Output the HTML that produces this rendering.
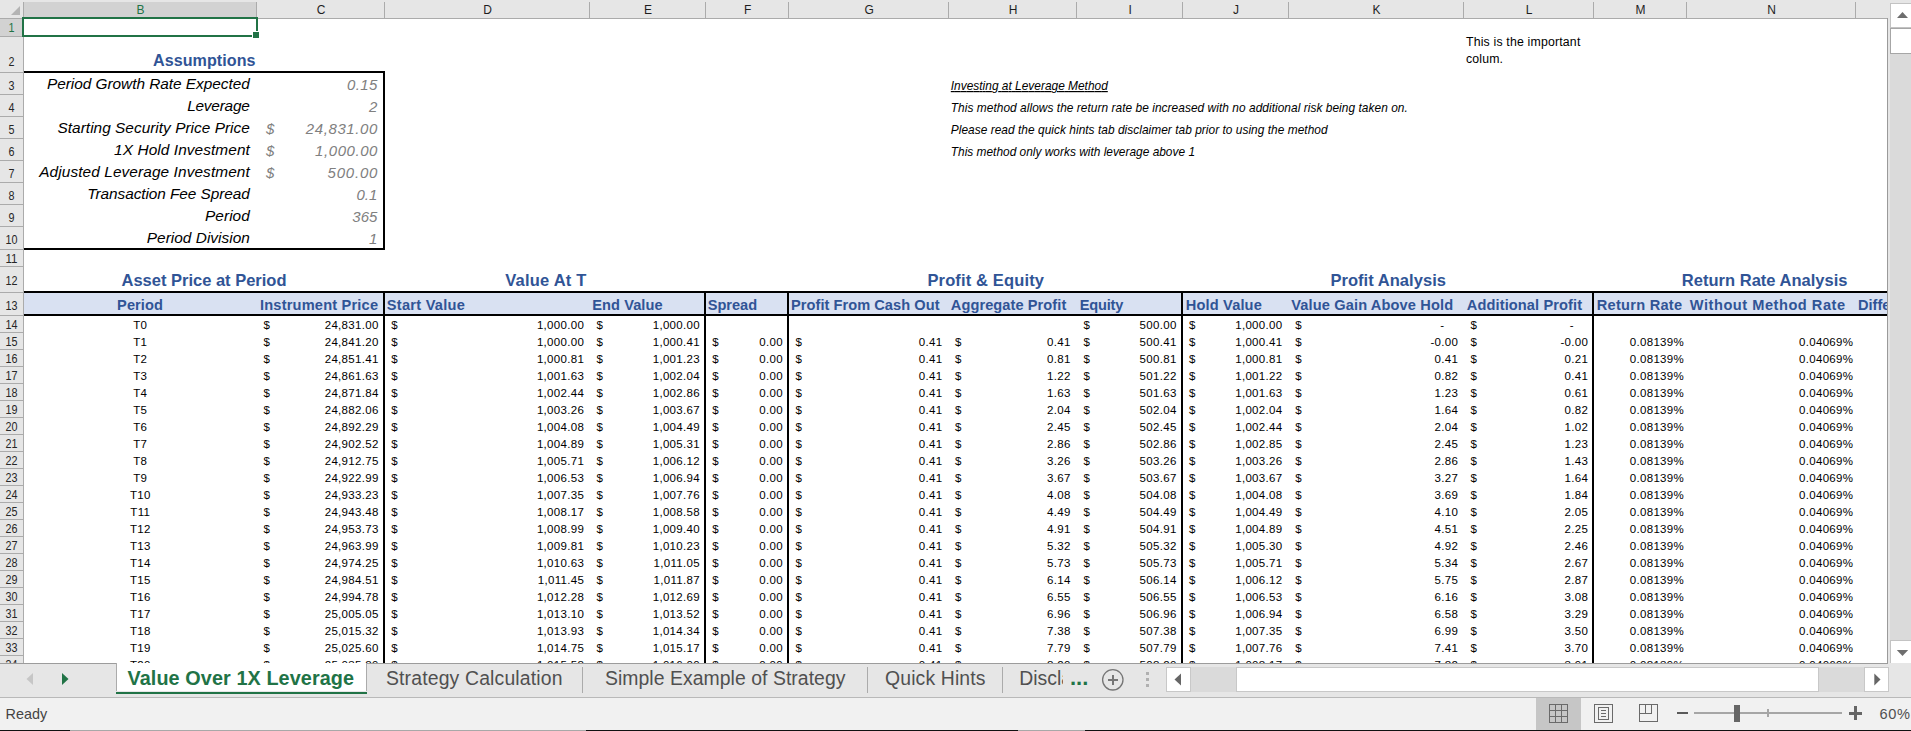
<!DOCTYPE html>
<html lang="en"><head><meta charset="utf-8"><title>Value Over 1X Leverage - Excel</title>
<style>
html,body{margin:0;padding:0;background:#fff;overflow:hidden}
svg{display:block;font-family:"Liberation Sans",sans-serif}
svg rect{shape-rendering:crispEdges}
text{white-space:pre}
</style></head><body>
<svg width="1911" height="731" viewBox="0 0 1911 731">
<defs>
<clipPath id="gridclip"><rect x="24" y="19" width="1863" height="644"/></clipPath>
<clipPath id="rowclip"><rect x="0" y="19" width="23" height="644"/></clipPath>
<clipPath id="discclip"><rect x="1000" y="660" width="63" height="40"/></clipPath>
</defs>
<rect x="0" y="0" width="1911" height="731" fill="#fff"/>
<rect x="24" y="293" width="1863" height="21" fill="#d9e1f2"/>
<rect x="24" y="71" width="361" height="2" fill="#000"/>
<rect x="24" y="248" width="361" height="2" fill="#000"/>
<rect x="383" y="71" width="2" height="179" fill="#000"/>
<rect x="24" y="291" width="1863" height="2" fill="#000"/>
<rect x="24" y="314" width="1863" height="2" fill="#000"/>
<rect x="383" y="291" width="2" height="372" fill="#000"/>
<rect x="704" y="291" width="2" height="372" fill="#000"/>
<rect x="787" y="291" width="2" height="372" fill="#000"/>
<rect x="1181" y="291" width="2" height="372" fill="#000"/>
<rect x="1592" y="291" width="2" height="372" fill="#000"/>
<text x="255.5" y="65.5" font-size="16.1" fill="#305496" textLength="102.5" lengthAdjust="spacing" text-anchor="end" font-weight="bold">Assumptions</text>
<text x="249.8" y="89.4" font-size="15.4" fill="#000" textLength="202.8" lengthAdjust="spacing" text-anchor="end" font-style="italic">Period Growth Rate Expected</text>
<text x="377.4" y="89.7" font-size="15.0" fill="#808080" textLength="30.3" lengthAdjust="spacing" text-anchor="end" font-style="italic">0.15</text>
<text x="249.8" y="111.4" font-size="15.4" fill="#000" textLength="62.6" lengthAdjust="spacing" text-anchor="end" font-style="italic">Leverage</text>
<text x="377.4" y="111.7" font-size="15.0" fill="#808080" text-anchor="end" font-style="italic">2</text>
<text x="249.8" y="133.39999999999998" font-size="15.4" fill="#000" textLength="192.3" lengthAdjust="spacing" text-anchor="end" font-style="italic">Starting Security Price Price</text>
<text x="377.4" y="133.7" font-size="15.0" fill="#808080" textLength="71.7" lengthAdjust="spacing" text-anchor="end" font-style="italic">24,831.00</text>
<text x="266" y="133.7" font-size="15.0" fill="#808080" font-style="italic">$</text>
<text x="249.8" y="155.39999999999998" font-size="15.4" fill="#000" textLength="135.7" lengthAdjust="spacing" text-anchor="end" font-style="italic">1X Hold Investment</text>
<text x="377.4" y="155.7" font-size="15.0" fill="#808080" textLength="62.3" lengthAdjust="spacing" text-anchor="end" font-style="italic">1,000.00</text>
<text x="266" y="155.7" font-size="15.0" fill="#808080" font-style="italic">$</text>
<text x="249.8" y="177.39999999999998" font-size="15.4" fill="#000" textLength="210.6" lengthAdjust="spacing" text-anchor="end" font-style="italic">Adjusted Leverage Investment</text>
<text x="377.4" y="177.7" font-size="15.0" fill="#808080" textLength="49.8" lengthAdjust="spacing" text-anchor="end" font-style="italic">500.00</text>
<text x="266" y="177.7" font-size="15.0" fill="#808080" font-style="italic">$</text>
<text x="249.8" y="199.39999999999998" font-size="15.4" fill="#000" textLength="162.5" lengthAdjust="spacing" text-anchor="end" font-style="italic">Transaction Fee Spread</text>
<text x="377.4" y="199.7" font-size="15.0" fill="#808080" text-anchor="end" font-style="italic">0.1</text>
<text x="249.8" y="221.39999999999998" font-size="15.4" fill="#000" textLength="44.8" lengthAdjust="spacing" text-anchor="end" font-style="italic">Period</text>
<text x="377.4" y="221.7" font-size="15.0" fill="#808080" text-anchor="end" font-style="italic">365</text>
<text x="249.8" y="243.39999999999998" font-size="15.4" fill="#000" textLength="103" lengthAdjust="spacing" text-anchor="end" font-style="italic">Period Division</text>
<text x="377.4" y="243.7" font-size="15.0" fill="#808080" text-anchor="end" font-style="italic">1</text>
<text x="950.8" y="90" font-size="11.9" fill="#000" textLength="157" lengthAdjust="spacing" font-style="italic" text-decoration="underline">Investing at Leverage Method</text>
<text x="950.8" y="112" font-size="11.9" fill="#000" textLength="457" lengthAdjust="spacing" font-style="italic">This method allows the return rate be increased with no additional risk being taken on.</text>
<text x="950.8" y="134" font-size="11.9" fill="#000" textLength="376.8" lengthAdjust="spacing" font-style="italic">Please read the quick hints tab disclaimer tab prior to using the method</text>
<text x="950.8" y="156" font-size="11.9" fill="#000" textLength="244.2" lengthAdjust="spacing" font-style="italic">This method only works with leverage above 1</text>
<text x="1466" y="46" font-size="12.3" fill="#000" textLength="114.3" lengthAdjust="spacing">This is the important</text>
<text x="1466" y="63" font-size="12.3" fill="#000" textLength="37" lengthAdjust="spacing">colum.</text>
<text x="204" y="285.5" font-size="16.5" fill="#305496" textLength="165" lengthAdjust="spacing" text-anchor="middle" font-weight="bold">Asset Price at Period</text>
<text x="545.8" y="285.5" font-size="16.5" fill="#305496" textLength="81.3" lengthAdjust="spacing" text-anchor="middle" font-weight="bold">Value At T</text>
<text x="985.7" y="285.5" font-size="16.5" fill="#305496" textLength="116.5" lengthAdjust="spacing" text-anchor="middle" font-weight="bold">Profit &amp; Equity</text>
<text x="1388.2" y="285.5" font-size="16.5" fill="#305496" textLength="115.5" lengthAdjust="spacing" text-anchor="middle" font-weight="bold">Profit Analysis</text>
<text x="1764.7" y="285.5" font-size="16.5" fill="#305496" textLength="165.7" lengthAdjust="spacing" text-anchor="middle" font-weight="bold">Return Rate Analysis</text>
<text x="140" y="309.7" font-size="14.6" fill="#305496" textLength="45.8" lengthAdjust="spacing" text-anchor="middle" font-weight="bold">Period</text>
<text x="319" y="309.7" font-size="14.6" fill="#305496" textLength="118" lengthAdjust="spacing" text-anchor="middle" font-weight="bold">Instrument Price</text>
<text x="386.8" y="309.7" font-size="14.6" fill="#305496" textLength="78" lengthAdjust="spacing" font-weight="bold">Start Value</text>
<text x="592.3" y="309.7" font-size="14.6" fill="#305496" textLength="70.3" lengthAdjust="spacing" font-weight="bold">End Value</text>
<text x="707.8" y="309.7" font-size="14.6" fill="#305496" textLength="49.3" lengthAdjust="spacing" font-weight="bold">Spread</text>
<text x="791" y="309.7" font-size="14.6" fill="#305496" textLength="148.5" lengthAdjust="spacing" font-weight="bold">Profit From Cash Out</text>
<text x="950.8" y="309.7" font-size="14.6" fill="#305496" textLength="115.5" lengthAdjust="spacing" font-weight="bold">Aggregate Profit</text>
<text x="1079.8" y="309.7" font-size="14.6" fill="#305496" textLength="43.5" lengthAdjust="spacing" font-weight="bold">Equity</text>
<text x="1185.8" y="309.7" font-size="14.6" fill="#305496" textLength="76" lengthAdjust="spacing" font-weight="bold">Hold Value</text>
<text x="1291.3" y="309.7" font-size="14.6" fill="#305496" textLength="161.8" lengthAdjust="spacing" font-weight="bold">Value Gain Above Hold</text>
<text x="1466.8" y="309.7" font-size="14.6" fill="#305496" textLength="115.3" lengthAdjust="spacing" font-weight="bold">Additional Profit</text>
<text x="1596.8" y="309.7" font-size="14.6" fill="#305496" textLength="85.3" lengthAdjust="spacing" font-weight="bold">Return Rate</text>
<text x="1689.8" y="309.7" font-size="14.6" fill="#305496" textLength="155.3" lengthAdjust="spacing" font-weight="bold">Without Method Rate</text>
<text x="1858" y="309.7" font-size="14.6" fill="#305496" font-weight="bold">Difference</text>
<g clip-path="url(#gridclip)" letter-spacing="0.3">
<text x="140.3" y="329.4" font-size="11.5" fill="#000" text-anchor="middle">T0</text>
<text x="263.4" y="329.4" font-size="11.5" fill="#000">$</text>
<text x="378.6" y="329.4" font-size="11.5" fill="#000" text-anchor="end">24,831.00</text>
<text x="391.2" y="329.4" font-size="11.5" fill="#000">$</text>
<text x="584.1" y="329.4" font-size="11.5" fill="#000" text-anchor="end">1,000.00</text>
<text x="596.4" y="329.4" font-size="11.5" fill="#000">$</text>
<text x="699.9" y="329.4" font-size="11.5" fill="#000" text-anchor="end">1,000.00</text>
<text x="1083.4" y="329.4" font-size="11.5" fill="#000">$</text>
<text x="1176.6" y="329.4" font-size="11.5" fill="#000" text-anchor="end">500.00</text>
<text x="1188.9" y="329.4" font-size="11.5" fill="#000">$</text>
<text x="1282.4" y="329.4" font-size="11.5" fill="#000" text-anchor="end">1,000.00</text>
<text x="1295.2" y="329.4" font-size="11.5" fill="#000">$</text>
<text x="1444.5" y="329.4" font-size="11.5" fill="#000" text-anchor="end">-</text>
<text x="1470.5" y="329.4" font-size="11.5" fill="#000">$</text>
<text x="1574" y="329.4" font-size="11.5" fill="#000" text-anchor="end">-</text>
<text x="140.3" y="346.4" font-size="11.5" fill="#000" text-anchor="middle">T1</text>
<text x="263.4" y="346.4" font-size="11.5" fill="#000">$</text>
<text x="378.6" y="346.4" font-size="11.5" fill="#000" text-anchor="end">24,841.20</text>
<text x="391.2" y="346.4" font-size="11.5" fill="#000">$</text>
<text x="584.1" y="346.4" font-size="11.5" fill="#000" text-anchor="end">1,000.00</text>
<text x="596.4" y="346.4" font-size="11.5" fill="#000">$</text>
<text x="699.9" y="346.4" font-size="11.5" fill="#000" text-anchor="end">1,000.41</text>
<text x="712.2" y="346.4" font-size="11.5" fill="#000">$</text>
<text x="782.9" y="346.4" font-size="11.5" fill="#000" text-anchor="end">0.00</text>
<text x="795.4" y="346.4" font-size="11.5" fill="#000">$</text>
<text x="942.4" y="346.4" font-size="11.5" fill="#000" text-anchor="end">0.41</text>
<text x="954.9" y="346.4" font-size="11.5" fill="#000">$</text>
<text x="1070.6" y="346.4" font-size="11.5" fill="#000" text-anchor="end">0.41</text>
<text x="1083.4" y="346.4" font-size="11.5" fill="#000">$</text>
<text x="1176.6" y="346.4" font-size="11.5" fill="#000" text-anchor="end">500.41</text>
<text x="1188.9" y="346.4" font-size="11.5" fill="#000">$</text>
<text x="1282.4" y="346.4" font-size="11.5" fill="#000" text-anchor="end">1,000.41</text>
<text x="1295.2" y="346.4" font-size="11.5" fill="#000">$</text>
<text x="1458.1" y="346.4" font-size="11.5" fill="#000" text-anchor="end">-0.00</text>
<text x="1470.5" y="346.4" font-size="11.5" fill="#000">$</text>
<text x="1588.1" y="346.4" font-size="11.5" fill="#000" text-anchor="end">-0.00</text>
<text x="1684" y="346.4" font-size="11.5" fill="#000" text-anchor="end">0.08139%</text>
<text x="1853.3" y="346.4" font-size="11.5" fill="#000" text-anchor="end">0.04069%</text>
<text x="140.3" y="363.4" font-size="11.5" fill="#000" text-anchor="middle">T2</text>
<text x="263.4" y="363.4" font-size="11.5" fill="#000">$</text>
<text x="378.6" y="363.4" font-size="11.5" fill="#000" text-anchor="end">24,851.41</text>
<text x="391.2" y="363.4" font-size="11.5" fill="#000">$</text>
<text x="584.1" y="363.4" font-size="11.5" fill="#000" text-anchor="end">1,000.81</text>
<text x="596.4" y="363.4" font-size="11.5" fill="#000">$</text>
<text x="699.9" y="363.4" font-size="11.5" fill="#000" text-anchor="end">1,001.23</text>
<text x="712.2" y="363.4" font-size="11.5" fill="#000">$</text>
<text x="782.9" y="363.4" font-size="11.5" fill="#000" text-anchor="end">0.00</text>
<text x="795.4" y="363.4" font-size="11.5" fill="#000">$</text>
<text x="942.4" y="363.4" font-size="11.5" fill="#000" text-anchor="end">0.41</text>
<text x="954.9" y="363.4" font-size="11.5" fill="#000">$</text>
<text x="1070.6" y="363.4" font-size="11.5" fill="#000" text-anchor="end">0.81</text>
<text x="1083.4" y="363.4" font-size="11.5" fill="#000">$</text>
<text x="1176.6" y="363.4" font-size="11.5" fill="#000" text-anchor="end">500.81</text>
<text x="1188.9" y="363.4" font-size="11.5" fill="#000">$</text>
<text x="1282.4" y="363.4" font-size="11.5" fill="#000" text-anchor="end">1,000.81</text>
<text x="1295.2" y="363.4" font-size="11.5" fill="#000">$</text>
<text x="1458.1" y="363.4" font-size="11.5" fill="#000" text-anchor="end">0.41</text>
<text x="1470.5" y="363.4" font-size="11.5" fill="#000">$</text>
<text x="1588.1" y="363.4" font-size="11.5" fill="#000" text-anchor="end">0.21</text>
<text x="1684" y="363.4" font-size="11.5" fill="#000" text-anchor="end">0.08139%</text>
<text x="1853.3" y="363.4" font-size="11.5" fill="#000" text-anchor="end">0.04069%</text>
<text x="140.3" y="380.4" font-size="11.5" fill="#000" text-anchor="middle">T3</text>
<text x="263.4" y="380.4" font-size="11.5" fill="#000">$</text>
<text x="378.6" y="380.4" font-size="11.5" fill="#000" text-anchor="end">24,861.63</text>
<text x="391.2" y="380.4" font-size="11.5" fill="#000">$</text>
<text x="584.1" y="380.4" font-size="11.5" fill="#000" text-anchor="end">1,001.63</text>
<text x="596.4" y="380.4" font-size="11.5" fill="#000">$</text>
<text x="699.9" y="380.4" font-size="11.5" fill="#000" text-anchor="end">1,002.04</text>
<text x="712.2" y="380.4" font-size="11.5" fill="#000">$</text>
<text x="782.9" y="380.4" font-size="11.5" fill="#000" text-anchor="end">0.00</text>
<text x="795.4" y="380.4" font-size="11.5" fill="#000">$</text>
<text x="942.4" y="380.4" font-size="11.5" fill="#000" text-anchor="end">0.41</text>
<text x="954.9" y="380.4" font-size="11.5" fill="#000">$</text>
<text x="1070.6" y="380.4" font-size="11.5" fill="#000" text-anchor="end">1.22</text>
<text x="1083.4" y="380.4" font-size="11.5" fill="#000">$</text>
<text x="1176.6" y="380.4" font-size="11.5" fill="#000" text-anchor="end">501.22</text>
<text x="1188.9" y="380.4" font-size="11.5" fill="#000">$</text>
<text x="1282.4" y="380.4" font-size="11.5" fill="#000" text-anchor="end">1,001.22</text>
<text x="1295.2" y="380.4" font-size="11.5" fill="#000">$</text>
<text x="1458.1" y="380.4" font-size="11.5" fill="#000" text-anchor="end">0.82</text>
<text x="1470.5" y="380.4" font-size="11.5" fill="#000">$</text>
<text x="1588.1" y="380.4" font-size="11.5" fill="#000" text-anchor="end">0.41</text>
<text x="1684" y="380.4" font-size="11.5" fill="#000" text-anchor="end">0.08139%</text>
<text x="1853.3" y="380.4" font-size="11.5" fill="#000" text-anchor="end">0.04069%</text>
<text x="140.3" y="397.4" font-size="11.5" fill="#000" text-anchor="middle">T4</text>
<text x="263.4" y="397.4" font-size="11.5" fill="#000">$</text>
<text x="378.6" y="397.4" font-size="11.5" fill="#000" text-anchor="end">24,871.84</text>
<text x="391.2" y="397.4" font-size="11.5" fill="#000">$</text>
<text x="584.1" y="397.4" font-size="11.5" fill="#000" text-anchor="end">1,002.44</text>
<text x="596.4" y="397.4" font-size="11.5" fill="#000">$</text>
<text x="699.9" y="397.4" font-size="11.5" fill="#000" text-anchor="end">1,002.86</text>
<text x="712.2" y="397.4" font-size="11.5" fill="#000">$</text>
<text x="782.9" y="397.4" font-size="11.5" fill="#000" text-anchor="end">0.00</text>
<text x="795.4" y="397.4" font-size="11.5" fill="#000">$</text>
<text x="942.4" y="397.4" font-size="11.5" fill="#000" text-anchor="end">0.41</text>
<text x="954.9" y="397.4" font-size="11.5" fill="#000">$</text>
<text x="1070.6" y="397.4" font-size="11.5" fill="#000" text-anchor="end">1.63</text>
<text x="1083.4" y="397.4" font-size="11.5" fill="#000">$</text>
<text x="1176.6" y="397.4" font-size="11.5" fill="#000" text-anchor="end">501.63</text>
<text x="1188.9" y="397.4" font-size="11.5" fill="#000">$</text>
<text x="1282.4" y="397.4" font-size="11.5" fill="#000" text-anchor="end">1,001.63</text>
<text x="1295.2" y="397.4" font-size="11.5" fill="#000">$</text>
<text x="1458.1" y="397.4" font-size="11.5" fill="#000" text-anchor="end">1.23</text>
<text x="1470.5" y="397.4" font-size="11.5" fill="#000">$</text>
<text x="1588.1" y="397.4" font-size="11.5" fill="#000" text-anchor="end">0.61</text>
<text x="1684" y="397.4" font-size="11.5" fill="#000" text-anchor="end">0.08139%</text>
<text x="1853.3" y="397.4" font-size="11.5" fill="#000" text-anchor="end">0.04069%</text>
<text x="140.3" y="414.4" font-size="11.5" fill="#000" text-anchor="middle">T5</text>
<text x="263.4" y="414.4" font-size="11.5" fill="#000">$</text>
<text x="378.6" y="414.4" font-size="11.5" fill="#000" text-anchor="end">24,882.06</text>
<text x="391.2" y="414.4" font-size="11.5" fill="#000">$</text>
<text x="584.1" y="414.4" font-size="11.5" fill="#000" text-anchor="end">1,003.26</text>
<text x="596.4" y="414.4" font-size="11.5" fill="#000">$</text>
<text x="699.9" y="414.4" font-size="11.5" fill="#000" text-anchor="end">1,003.67</text>
<text x="712.2" y="414.4" font-size="11.5" fill="#000">$</text>
<text x="782.9" y="414.4" font-size="11.5" fill="#000" text-anchor="end">0.00</text>
<text x="795.4" y="414.4" font-size="11.5" fill="#000">$</text>
<text x="942.4" y="414.4" font-size="11.5" fill="#000" text-anchor="end">0.41</text>
<text x="954.9" y="414.4" font-size="11.5" fill="#000">$</text>
<text x="1070.6" y="414.4" font-size="11.5" fill="#000" text-anchor="end">2.04</text>
<text x="1083.4" y="414.4" font-size="11.5" fill="#000">$</text>
<text x="1176.6" y="414.4" font-size="11.5" fill="#000" text-anchor="end">502.04</text>
<text x="1188.9" y="414.4" font-size="11.5" fill="#000">$</text>
<text x="1282.4" y="414.4" font-size="11.5" fill="#000" text-anchor="end">1,002.04</text>
<text x="1295.2" y="414.4" font-size="11.5" fill="#000">$</text>
<text x="1458.1" y="414.4" font-size="11.5" fill="#000" text-anchor="end">1.64</text>
<text x="1470.5" y="414.4" font-size="11.5" fill="#000">$</text>
<text x="1588.1" y="414.4" font-size="11.5" fill="#000" text-anchor="end">0.82</text>
<text x="1684" y="414.4" font-size="11.5" fill="#000" text-anchor="end">0.08139%</text>
<text x="1853.3" y="414.4" font-size="11.5" fill="#000" text-anchor="end">0.04069%</text>
<text x="140.3" y="431.4" font-size="11.5" fill="#000" text-anchor="middle">T6</text>
<text x="263.4" y="431.4" font-size="11.5" fill="#000">$</text>
<text x="378.6" y="431.4" font-size="11.5" fill="#000" text-anchor="end">24,892.29</text>
<text x="391.2" y="431.4" font-size="11.5" fill="#000">$</text>
<text x="584.1" y="431.4" font-size="11.5" fill="#000" text-anchor="end">1,004.08</text>
<text x="596.4" y="431.4" font-size="11.5" fill="#000">$</text>
<text x="699.9" y="431.4" font-size="11.5" fill="#000" text-anchor="end">1,004.49</text>
<text x="712.2" y="431.4" font-size="11.5" fill="#000">$</text>
<text x="782.9" y="431.4" font-size="11.5" fill="#000" text-anchor="end">0.00</text>
<text x="795.4" y="431.4" font-size="11.5" fill="#000">$</text>
<text x="942.4" y="431.4" font-size="11.5" fill="#000" text-anchor="end">0.41</text>
<text x="954.9" y="431.4" font-size="11.5" fill="#000">$</text>
<text x="1070.6" y="431.4" font-size="11.5" fill="#000" text-anchor="end">2.45</text>
<text x="1083.4" y="431.4" font-size="11.5" fill="#000">$</text>
<text x="1176.6" y="431.4" font-size="11.5" fill="#000" text-anchor="end">502.45</text>
<text x="1188.9" y="431.4" font-size="11.5" fill="#000">$</text>
<text x="1282.4" y="431.4" font-size="11.5" fill="#000" text-anchor="end">1,002.44</text>
<text x="1295.2" y="431.4" font-size="11.5" fill="#000">$</text>
<text x="1458.1" y="431.4" font-size="11.5" fill="#000" text-anchor="end">2.04</text>
<text x="1470.5" y="431.4" font-size="11.5" fill="#000">$</text>
<text x="1588.1" y="431.4" font-size="11.5" fill="#000" text-anchor="end">1.02</text>
<text x="1684" y="431.4" font-size="11.5" fill="#000" text-anchor="end">0.08139%</text>
<text x="1853.3" y="431.4" font-size="11.5" fill="#000" text-anchor="end">0.04069%</text>
<text x="140.3" y="448.4" font-size="11.5" fill="#000" text-anchor="middle">T7</text>
<text x="263.4" y="448.4" font-size="11.5" fill="#000">$</text>
<text x="378.6" y="448.4" font-size="11.5" fill="#000" text-anchor="end">24,902.52</text>
<text x="391.2" y="448.4" font-size="11.5" fill="#000">$</text>
<text x="584.1" y="448.4" font-size="11.5" fill="#000" text-anchor="end">1,004.89</text>
<text x="596.4" y="448.4" font-size="11.5" fill="#000">$</text>
<text x="699.9" y="448.4" font-size="11.5" fill="#000" text-anchor="end">1,005.31</text>
<text x="712.2" y="448.4" font-size="11.5" fill="#000">$</text>
<text x="782.9" y="448.4" font-size="11.5" fill="#000" text-anchor="end">0.00</text>
<text x="795.4" y="448.4" font-size="11.5" fill="#000">$</text>
<text x="942.4" y="448.4" font-size="11.5" fill="#000" text-anchor="end">0.41</text>
<text x="954.9" y="448.4" font-size="11.5" fill="#000">$</text>
<text x="1070.6" y="448.4" font-size="11.5" fill="#000" text-anchor="end">2.86</text>
<text x="1083.4" y="448.4" font-size="11.5" fill="#000">$</text>
<text x="1176.6" y="448.4" font-size="11.5" fill="#000" text-anchor="end">502.86</text>
<text x="1188.9" y="448.4" font-size="11.5" fill="#000">$</text>
<text x="1282.4" y="448.4" font-size="11.5" fill="#000" text-anchor="end">1,002.85</text>
<text x="1295.2" y="448.4" font-size="11.5" fill="#000">$</text>
<text x="1458.1" y="448.4" font-size="11.5" fill="#000" text-anchor="end">2.45</text>
<text x="1470.5" y="448.4" font-size="11.5" fill="#000">$</text>
<text x="1588.1" y="448.4" font-size="11.5" fill="#000" text-anchor="end">1.23</text>
<text x="1684" y="448.4" font-size="11.5" fill="#000" text-anchor="end">0.08139%</text>
<text x="1853.3" y="448.4" font-size="11.5" fill="#000" text-anchor="end">0.04069%</text>
<text x="140.3" y="465.4" font-size="11.5" fill="#000" text-anchor="middle">T8</text>
<text x="263.4" y="465.4" font-size="11.5" fill="#000">$</text>
<text x="378.6" y="465.4" font-size="11.5" fill="#000" text-anchor="end">24,912.75</text>
<text x="391.2" y="465.4" font-size="11.5" fill="#000">$</text>
<text x="584.1" y="465.4" font-size="11.5" fill="#000" text-anchor="end">1,005.71</text>
<text x="596.4" y="465.4" font-size="11.5" fill="#000">$</text>
<text x="699.9" y="465.4" font-size="11.5" fill="#000" text-anchor="end">1,006.12</text>
<text x="712.2" y="465.4" font-size="11.5" fill="#000">$</text>
<text x="782.9" y="465.4" font-size="11.5" fill="#000" text-anchor="end">0.00</text>
<text x="795.4" y="465.4" font-size="11.5" fill="#000">$</text>
<text x="942.4" y="465.4" font-size="11.5" fill="#000" text-anchor="end">0.41</text>
<text x="954.9" y="465.4" font-size="11.5" fill="#000">$</text>
<text x="1070.6" y="465.4" font-size="11.5" fill="#000" text-anchor="end">3.26</text>
<text x="1083.4" y="465.4" font-size="11.5" fill="#000">$</text>
<text x="1176.6" y="465.4" font-size="11.5" fill="#000" text-anchor="end">503.26</text>
<text x="1188.9" y="465.4" font-size="11.5" fill="#000">$</text>
<text x="1282.4" y="465.4" font-size="11.5" fill="#000" text-anchor="end">1,003.26</text>
<text x="1295.2" y="465.4" font-size="11.5" fill="#000">$</text>
<text x="1458.1" y="465.4" font-size="11.5" fill="#000" text-anchor="end">2.86</text>
<text x="1470.5" y="465.4" font-size="11.5" fill="#000">$</text>
<text x="1588.1" y="465.4" font-size="11.5" fill="#000" text-anchor="end">1.43</text>
<text x="1684" y="465.4" font-size="11.5" fill="#000" text-anchor="end">0.08139%</text>
<text x="1853.3" y="465.4" font-size="11.5" fill="#000" text-anchor="end">0.04069%</text>
<text x="140.3" y="482.4" font-size="11.5" fill="#000" text-anchor="middle">T9</text>
<text x="263.4" y="482.4" font-size="11.5" fill="#000">$</text>
<text x="378.6" y="482.4" font-size="11.5" fill="#000" text-anchor="end">24,922.99</text>
<text x="391.2" y="482.4" font-size="11.5" fill="#000">$</text>
<text x="584.1" y="482.4" font-size="11.5" fill="#000" text-anchor="end">1,006.53</text>
<text x="596.4" y="482.4" font-size="11.5" fill="#000">$</text>
<text x="699.9" y="482.4" font-size="11.5" fill="#000" text-anchor="end">1,006.94</text>
<text x="712.2" y="482.4" font-size="11.5" fill="#000">$</text>
<text x="782.9" y="482.4" font-size="11.5" fill="#000" text-anchor="end">0.00</text>
<text x="795.4" y="482.4" font-size="11.5" fill="#000">$</text>
<text x="942.4" y="482.4" font-size="11.5" fill="#000" text-anchor="end">0.41</text>
<text x="954.9" y="482.4" font-size="11.5" fill="#000">$</text>
<text x="1070.6" y="482.4" font-size="11.5" fill="#000" text-anchor="end">3.67</text>
<text x="1083.4" y="482.4" font-size="11.5" fill="#000">$</text>
<text x="1176.6" y="482.4" font-size="11.5" fill="#000" text-anchor="end">503.67</text>
<text x="1188.9" y="482.4" font-size="11.5" fill="#000">$</text>
<text x="1282.4" y="482.4" font-size="11.5" fill="#000" text-anchor="end">1,003.67</text>
<text x="1295.2" y="482.4" font-size="11.5" fill="#000">$</text>
<text x="1458.1" y="482.4" font-size="11.5" fill="#000" text-anchor="end">3.27</text>
<text x="1470.5" y="482.4" font-size="11.5" fill="#000">$</text>
<text x="1588.1" y="482.4" font-size="11.5" fill="#000" text-anchor="end">1.64</text>
<text x="1684" y="482.4" font-size="11.5" fill="#000" text-anchor="end">0.08139%</text>
<text x="1853.3" y="482.4" font-size="11.5" fill="#000" text-anchor="end">0.04069%</text>
<text x="140.3" y="499.4" font-size="11.5" fill="#000" text-anchor="middle">T10</text>
<text x="263.4" y="499.4" font-size="11.5" fill="#000">$</text>
<text x="378.6" y="499.4" font-size="11.5" fill="#000" text-anchor="end">24,933.23</text>
<text x="391.2" y="499.4" font-size="11.5" fill="#000">$</text>
<text x="584.1" y="499.4" font-size="11.5" fill="#000" text-anchor="end">1,007.35</text>
<text x="596.4" y="499.4" font-size="11.5" fill="#000">$</text>
<text x="699.9" y="499.4" font-size="11.5" fill="#000" text-anchor="end">1,007.76</text>
<text x="712.2" y="499.4" font-size="11.5" fill="#000">$</text>
<text x="782.9" y="499.4" font-size="11.5" fill="#000" text-anchor="end">0.00</text>
<text x="795.4" y="499.4" font-size="11.5" fill="#000">$</text>
<text x="942.4" y="499.4" font-size="11.5" fill="#000" text-anchor="end">0.41</text>
<text x="954.9" y="499.4" font-size="11.5" fill="#000">$</text>
<text x="1070.6" y="499.4" font-size="11.5" fill="#000" text-anchor="end">4.08</text>
<text x="1083.4" y="499.4" font-size="11.5" fill="#000">$</text>
<text x="1176.6" y="499.4" font-size="11.5" fill="#000" text-anchor="end">504.08</text>
<text x="1188.9" y="499.4" font-size="11.5" fill="#000">$</text>
<text x="1282.4" y="499.4" font-size="11.5" fill="#000" text-anchor="end">1,004.08</text>
<text x="1295.2" y="499.4" font-size="11.5" fill="#000">$</text>
<text x="1458.1" y="499.4" font-size="11.5" fill="#000" text-anchor="end">3.69</text>
<text x="1470.5" y="499.4" font-size="11.5" fill="#000">$</text>
<text x="1588.1" y="499.4" font-size="11.5" fill="#000" text-anchor="end">1.84</text>
<text x="1684" y="499.4" font-size="11.5" fill="#000" text-anchor="end">0.08139%</text>
<text x="1853.3" y="499.4" font-size="11.5" fill="#000" text-anchor="end">0.04069%</text>
<text x="140.3" y="516.4" font-size="11.5" fill="#000" text-anchor="middle">T11</text>
<text x="263.4" y="516.4" font-size="11.5" fill="#000">$</text>
<text x="378.6" y="516.4" font-size="11.5" fill="#000" text-anchor="end">24,943.48</text>
<text x="391.2" y="516.4" font-size="11.5" fill="#000">$</text>
<text x="584.1" y="516.4" font-size="11.5" fill="#000" text-anchor="end">1,008.17</text>
<text x="596.4" y="516.4" font-size="11.5" fill="#000">$</text>
<text x="699.9" y="516.4" font-size="11.5" fill="#000" text-anchor="end">1,008.58</text>
<text x="712.2" y="516.4" font-size="11.5" fill="#000">$</text>
<text x="782.9" y="516.4" font-size="11.5" fill="#000" text-anchor="end">0.00</text>
<text x="795.4" y="516.4" font-size="11.5" fill="#000">$</text>
<text x="942.4" y="516.4" font-size="11.5" fill="#000" text-anchor="end">0.41</text>
<text x="954.9" y="516.4" font-size="11.5" fill="#000">$</text>
<text x="1070.6" y="516.4" font-size="11.5" fill="#000" text-anchor="end">4.49</text>
<text x="1083.4" y="516.4" font-size="11.5" fill="#000">$</text>
<text x="1176.6" y="516.4" font-size="11.5" fill="#000" text-anchor="end">504.49</text>
<text x="1188.9" y="516.4" font-size="11.5" fill="#000">$</text>
<text x="1282.4" y="516.4" font-size="11.5" fill="#000" text-anchor="end">1,004.49</text>
<text x="1295.2" y="516.4" font-size="11.5" fill="#000">$</text>
<text x="1458.1" y="516.4" font-size="11.5" fill="#000" text-anchor="end">4.10</text>
<text x="1470.5" y="516.4" font-size="11.5" fill="#000">$</text>
<text x="1588.1" y="516.4" font-size="11.5" fill="#000" text-anchor="end">2.05</text>
<text x="1684" y="516.4" font-size="11.5" fill="#000" text-anchor="end">0.08139%</text>
<text x="1853.3" y="516.4" font-size="11.5" fill="#000" text-anchor="end">0.04069%</text>
<text x="140.3" y="533.4" font-size="11.5" fill="#000" text-anchor="middle">T12</text>
<text x="263.4" y="533.4" font-size="11.5" fill="#000">$</text>
<text x="378.6" y="533.4" font-size="11.5" fill="#000" text-anchor="end">24,953.73</text>
<text x="391.2" y="533.4" font-size="11.5" fill="#000">$</text>
<text x="584.1" y="533.4" font-size="11.5" fill="#000" text-anchor="end">1,008.99</text>
<text x="596.4" y="533.4" font-size="11.5" fill="#000">$</text>
<text x="699.9" y="533.4" font-size="11.5" fill="#000" text-anchor="end">1,009.40</text>
<text x="712.2" y="533.4" font-size="11.5" fill="#000">$</text>
<text x="782.9" y="533.4" font-size="11.5" fill="#000" text-anchor="end">0.00</text>
<text x="795.4" y="533.4" font-size="11.5" fill="#000">$</text>
<text x="942.4" y="533.4" font-size="11.5" fill="#000" text-anchor="end">0.41</text>
<text x="954.9" y="533.4" font-size="11.5" fill="#000">$</text>
<text x="1070.6" y="533.4" font-size="11.5" fill="#000" text-anchor="end">4.91</text>
<text x="1083.4" y="533.4" font-size="11.5" fill="#000">$</text>
<text x="1176.6" y="533.4" font-size="11.5" fill="#000" text-anchor="end">504.91</text>
<text x="1188.9" y="533.4" font-size="11.5" fill="#000">$</text>
<text x="1282.4" y="533.4" font-size="11.5" fill="#000" text-anchor="end">1,004.89</text>
<text x="1295.2" y="533.4" font-size="11.5" fill="#000">$</text>
<text x="1458.1" y="533.4" font-size="11.5" fill="#000" text-anchor="end">4.51</text>
<text x="1470.5" y="533.4" font-size="11.5" fill="#000">$</text>
<text x="1588.1" y="533.4" font-size="11.5" fill="#000" text-anchor="end">2.25</text>
<text x="1684" y="533.4" font-size="11.5" fill="#000" text-anchor="end">0.08139%</text>
<text x="1853.3" y="533.4" font-size="11.5" fill="#000" text-anchor="end">0.04069%</text>
<text x="140.3" y="550.4" font-size="11.5" fill="#000" text-anchor="middle">T13</text>
<text x="263.4" y="550.4" font-size="11.5" fill="#000">$</text>
<text x="378.6" y="550.4" font-size="11.5" fill="#000" text-anchor="end">24,963.99</text>
<text x="391.2" y="550.4" font-size="11.5" fill="#000">$</text>
<text x="584.1" y="550.4" font-size="11.5" fill="#000" text-anchor="end">1,009.81</text>
<text x="596.4" y="550.4" font-size="11.5" fill="#000">$</text>
<text x="699.9" y="550.4" font-size="11.5" fill="#000" text-anchor="end">1,010.23</text>
<text x="712.2" y="550.4" font-size="11.5" fill="#000">$</text>
<text x="782.9" y="550.4" font-size="11.5" fill="#000" text-anchor="end">0.00</text>
<text x="795.4" y="550.4" font-size="11.5" fill="#000">$</text>
<text x="942.4" y="550.4" font-size="11.5" fill="#000" text-anchor="end">0.41</text>
<text x="954.9" y="550.4" font-size="11.5" fill="#000">$</text>
<text x="1070.6" y="550.4" font-size="11.5" fill="#000" text-anchor="end">5.32</text>
<text x="1083.4" y="550.4" font-size="11.5" fill="#000">$</text>
<text x="1176.6" y="550.4" font-size="11.5" fill="#000" text-anchor="end">505.32</text>
<text x="1188.9" y="550.4" font-size="11.5" fill="#000">$</text>
<text x="1282.4" y="550.4" font-size="11.5" fill="#000" text-anchor="end">1,005.30</text>
<text x="1295.2" y="550.4" font-size="11.5" fill="#000">$</text>
<text x="1458.1" y="550.4" font-size="11.5" fill="#000" text-anchor="end">4.92</text>
<text x="1470.5" y="550.4" font-size="11.5" fill="#000">$</text>
<text x="1588.1" y="550.4" font-size="11.5" fill="#000" text-anchor="end">2.46</text>
<text x="1684" y="550.4" font-size="11.5" fill="#000" text-anchor="end">0.08139%</text>
<text x="1853.3" y="550.4" font-size="11.5" fill="#000" text-anchor="end">0.04069%</text>
<text x="140.3" y="567.4" font-size="11.5" fill="#000" text-anchor="middle">T14</text>
<text x="263.4" y="567.4" font-size="11.5" fill="#000">$</text>
<text x="378.6" y="567.4" font-size="11.5" fill="#000" text-anchor="end">24,974.25</text>
<text x="391.2" y="567.4" font-size="11.5" fill="#000">$</text>
<text x="584.1" y="567.4" font-size="11.5" fill="#000" text-anchor="end">1,010.63</text>
<text x="596.4" y="567.4" font-size="11.5" fill="#000">$</text>
<text x="699.9" y="567.4" font-size="11.5" fill="#000" text-anchor="end">1,011.05</text>
<text x="712.2" y="567.4" font-size="11.5" fill="#000">$</text>
<text x="782.9" y="567.4" font-size="11.5" fill="#000" text-anchor="end">0.00</text>
<text x="795.4" y="567.4" font-size="11.5" fill="#000">$</text>
<text x="942.4" y="567.4" font-size="11.5" fill="#000" text-anchor="end">0.41</text>
<text x="954.9" y="567.4" font-size="11.5" fill="#000">$</text>
<text x="1070.6" y="567.4" font-size="11.5" fill="#000" text-anchor="end">5.73</text>
<text x="1083.4" y="567.4" font-size="11.5" fill="#000">$</text>
<text x="1176.6" y="567.4" font-size="11.5" fill="#000" text-anchor="end">505.73</text>
<text x="1188.9" y="567.4" font-size="11.5" fill="#000">$</text>
<text x="1282.4" y="567.4" font-size="11.5" fill="#000" text-anchor="end">1,005.71</text>
<text x="1295.2" y="567.4" font-size="11.5" fill="#000">$</text>
<text x="1458.1" y="567.4" font-size="11.5" fill="#000" text-anchor="end">5.34</text>
<text x="1470.5" y="567.4" font-size="11.5" fill="#000">$</text>
<text x="1588.1" y="567.4" font-size="11.5" fill="#000" text-anchor="end">2.67</text>
<text x="1684" y="567.4" font-size="11.5" fill="#000" text-anchor="end">0.08139%</text>
<text x="1853.3" y="567.4" font-size="11.5" fill="#000" text-anchor="end">0.04069%</text>
<text x="140.3" y="584.4" font-size="11.5" fill="#000" text-anchor="middle">T15</text>
<text x="263.4" y="584.4" font-size="11.5" fill="#000">$</text>
<text x="378.6" y="584.4" font-size="11.5" fill="#000" text-anchor="end">24,984.51</text>
<text x="391.2" y="584.4" font-size="11.5" fill="#000">$</text>
<text x="584.1" y="584.4" font-size="11.5" fill="#000" text-anchor="end">1,011.45</text>
<text x="596.4" y="584.4" font-size="11.5" fill="#000">$</text>
<text x="699.9" y="584.4" font-size="11.5" fill="#000" text-anchor="end">1,011.87</text>
<text x="712.2" y="584.4" font-size="11.5" fill="#000">$</text>
<text x="782.9" y="584.4" font-size="11.5" fill="#000" text-anchor="end">0.00</text>
<text x="795.4" y="584.4" font-size="11.5" fill="#000">$</text>
<text x="942.4" y="584.4" font-size="11.5" fill="#000" text-anchor="end">0.41</text>
<text x="954.9" y="584.4" font-size="11.5" fill="#000">$</text>
<text x="1070.6" y="584.4" font-size="11.5" fill="#000" text-anchor="end">6.14</text>
<text x="1083.4" y="584.4" font-size="11.5" fill="#000">$</text>
<text x="1176.6" y="584.4" font-size="11.5" fill="#000" text-anchor="end">506.14</text>
<text x="1188.9" y="584.4" font-size="11.5" fill="#000">$</text>
<text x="1282.4" y="584.4" font-size="11.5" fill="#000" text-anchor="end">1,006.12</text>
<text x="1295.2" y="584.4" font-size="11.5" fill="#000">$</text>
<text x="1458.1" y="584.4" font-size="11.5" fill="#000" text-anchor="end">5.75</text>
<text x="1470.5" y="584.4" font-size="11.5" fill="#000">$</text>
<text x="1588.1" y="584.4" font-size="11.5" fill="#000" text-anchor="end">2.87</text>
<text x="1684" y="584.4" font-size="11.5" fill="#000" text-anchor="end">0.08139%</text>
<text x="1853.3" y="584.4" font-size="11.5" fill="#000" text-anchor="end">0.04069%</text>
<text x="140.3" y="601.4" font-size="11.5" fill="#000" text-anchor="middle">T16</text>
<text x="263.4" y="601.4" font-size="11.5" fill="#000">$</text>
<text x="378.6" y="601.4" font-size="11.5" fill="#000" text-anchor="end">24,994.78</text>
<text x="391.2" y="601.4" font-size="11.5" fill="#000">$</text>
<text x="584.1" y="601.4" font-size="11.5" fill="#000" text-anchor="end">1,012.28</text>
<text x="596.4" y="601.4" font-size="11.5" fill="#000">$</text>
<text x="699.9" y="601.4" font-size="11.5" fill="#000" text-anchor="end">1,012.69</text>
<text x="712.2" y="601.4" font-size="11.5" fill="#000">$</text>
<text x="782.9" y="601.4" font-size="11.5" fill="#000" text-anchor="end">0.00</text>
<text x="795.4" y="601.4" font-size="11.5" fill="#000">$</text>
<text x="942.4" y="601.4" font-size="11.5" fill="#000" text-anchor="end">0.41</text>
<text x="954.9" y="601.4" font-size="11.5" fill="#000">$</text>
<text x="1070.6" y="601.4" font-size="11.5" fill="#000" text-anchor="end">6.55</text>
<text x="1083.4" y="601.4" font-size="11.5" fill="#000">$</text>
<text x="1176.6" y="601.4" font-size="11.5" fill="#000" text-anchor="end">506.55</text>
<text x="1188.9" y="601.4" font-size="11.5" fill="#000">$</text>
<text x="1282.4" y="601.4" font-size="11.5" fill="#000" text-anchor="end">1,006.53</text>
<text x="1295.2" y="601.4" font-size="11.5" fill="#000">$</text>
<text x="1458.1" y="601.4" font-size="11.5" fill="#000" text-anchor="end">6.16</text>
<text x="1470.5" y="601.4" font-size="11.5" fill="#000">$</text>
<text x="1588.1" y="601.4" font-size="11.5" fill="#000" text-anchor="end">3.08</text>
<text x="1684" y="601.4" font-size="11.5" fill="#000" text-anchor="end">0.08139%</text>
<text x="1853.3" y="601.4" font-size="11.5" fill="#000" text-anchor="end">0.04069%</text>
<text x="140.3" y="618.4" font-size="11.5" fill="#000" text-anchor="middle">T17</text>
<text x="263.4" y="618.4" font-size="11.5" fill="#000">$</text>
<text x="378.6" y="618.4" font-size="11.5" fill="#000" text-anchor="end">25,005.05</text>
<text x="391.2" y="618.4" font-size="11.5" fill="#000">$</text>
<text x="584.1" y="618.4" font-size="11.5" fill="#000" text-anchor="end">1,013.10</text>
<text x="596.4" y="618.4" font-size="11.5" fill="#000">$</text>
<text x="699.9" y="618.4" font-size="11.5" fill="#000" text-anchor="end">1,013.52</text>
<text x="712.2" y="618.4" font-size="11.5" fill="#000">$</text>
<text x="782.9" y="618.4" font-size="11.5" fill="#000" text-anchor="end">0.00</text>
<text x="795.4" y="618.4" font-size="11.5" fill="#000">$</text>
<text x="942.4" y="618.4" font-size="11.5" fill="#000" text-anchor="end">0.41</text>
<text x="954.9" y="618.4" font-size="11.5" fill="#000">$</text>
<text x="1070.6" y="618.4" font-size="11.5" fill="#000" text-anchor="end">6.96</text>
<text x="1083.4" y="618.4" font-size="11.5" fill="#000">$</text>
<text x="1176.6" y="618.4" font-size="11.5" fill="#000" text-anchor="end">506.96</text>
<text x="1188.9" y="618.4" font-size="11.5" fill="#000">$</text>
<text x="1282.4" y="618.4" font-size="11.5" fill="#000" text-anchor="end">1,006.94</text>
<text x="1295.2" y="618.4" font-size="11.5" fill="#000">$</text>
<text x="1458.1" y="618.4" font-size="11.5" fill="#000" text-anchor="end">6.58</text>
<text x="1470.5" y="618.4" font-size="11.5" fill="#000">$</text>
<text x="1588.1" y="618.4" font-size="11.5" fill="#000" text-anchor="end">3.29</text>
<text x="1684" y="618.4" font-size="11.5" fill="#000" text-anchor="end">0.08139%</text>
<text x="1853.3" y="618.4" font-size="11.5" fill="#000" text-anchor="end">0.04069%</text>
<text x="140.3" y="635.4" font-size="11.5" fill="#000" text-anchor="middle">T18</text>
<text x="263.4" y="635.4" font-size="11.5" fill="#000">$</text>
<text x="378.6" y="635.4" font-size="11.5" fill="#000" text-anchor="end">25,015.32</text>
<text x="391.2" y="635.4" font-size="11.5" fill="#000">$</text>
<text x="584.1" y="635.4" font-size="11.5" fill="#000" text-anchor="end">1,013.93</text>
<text x="596.4" y="635.4" font-size="11.5" fill="#000">$</text>
<text x="699.9" y="635.4" font-size="11.5" fill="#000" text-anchor="end">1,014.34</text>
<text x="712.2" y="635.4" font-size="11.5" fill="#000">$</text>
<text x="782.9" y="635.4" font-size="11.5" fill="#000" text-anchor="end">0.00</text>
<text x="795.4" y="635.4" font-size="11.5" fill="#000">$</text>
<text x="942.4" y="635.4" font-size="11.5" fill="#000" text-anchor="end">0.41</text>
<text x="954.9" y="635.4" font-size="11.5" fill="#000">$</text>
<text x="1070.6" y="635.4" font-size="11.5" fill="#000" text-anchor="end">7.38</text>
<text x="1083.4" y="635.4" font-size="11.5" fill="#000">$</text>
<text x="1176.6" y="635.4" font-size="11.5" fill="#000" text-anchor="end">507.38</text>
<text x="1188.9" y="635.4" font-size="11.5" fill="#000">$</text>
<text x="1282.4" y="635.4" font-size="11.5" fill="#000" text-anchor="end">1,007.35</text>
<text x="1295.2" y="635.4" font-size="11.5" fill="#000">$</text>
<text x="1458.1" y="635.4" font-size="11.5" fill="#000" text-anchor="end">6.99</text>
<text x="1470.5" y="635.4" font-size="11.5" fill="#000">$</text>
<text x="1588.1" y="635.4" font-size="11.5" fill="#000" text-anchor="end">3.50</text>
<text x="1684" y="635.4" font-size="11.5" fill="#000" text-anchor="end">0.08139%</text>
<text x="1853.3" y="635.4" font-size="11.5" fill="#000" text-anchor="end">0.04069%</text>
<text x="140.3" y="652.4" font-size="11.5" fill="#000" text-anchor="middle">T19</text>
<text x="263.4" y="652.4" font-size="11.5" fill="#000">$</text>
<text x="378.6" y="652.4" font-size="11.5" fill="#000" text-anchor="end">25,025.60</text>
<text x="391.2" y="652.4" font-size="11.5" fill="#000">$</text>
<text x="584.1" y="652.4" font-size="11.5" fill="#000" text-anchor="end">1,014.75</text>
<text x="596.4" y="652.4" font-size="11.5" fill="#000">$</text>
<text x="699.9" y="652.4" font-size="11.5" fill="#000" text-anchor="end">1,015.17</text>
<text x="712.2" y="652.4" font-size="11.5" fill="#000">$</text>
<text x="782.9" y="652.4" font-size="11.5" fill="#000" text-anchor="end">0.00</text>
<text x="795.4" y="652.4" font-size="11.5" fill="#000">$</text>
<text x="942.4" y="652.4" font-size="11.5" fill="#000" text-anchor="end">0.41</text>
<text x="954.9" y="652.4" font-size="11.5" fill="#000">$</text>
<text x="1070.6" y="652.4" font-size="11.5" fill="#000" text-anchor="end">7.79</text>
<text x="1083.4" y="652.4" font-size="11.5" fill="#000">$</text>
<text x="1176.6" y="652.4" font-size="11.5" fill="#000" text-anchor="end">507.79</text>
<text x="1188.9" y="652.4" font-size="11.5" fill="#000">$</text>
<text x="1282.4" y="652.4" font-size="11.5" fill="#000" text-anchor="end">1,007.76</text>
<text x="1295.2" y="652.4" font-size="11.5" fill="#000">$</text>
<text x="1458.1" y="652.4" font-size="11.5" fill="#000" text-anchor="end">7.41</text>
<text x="1470.5" y="652.4" font-size="11.5" fill="#000">$</text>
<text x="1588.1" y="652.4" font-size="11.5" fill="#000" text-anchor="end">3.70</text>
<text x="1684" y="652.4" font-size="11.5" fill="#000" text-anchor="end">0.08139%</text>
<text x="1853.3" y="652.4" font-size="11.5" fill="#000" text-anchor="end">0.04069%</text>
<text x="140.3" y="669.4" font-size="11.5" fill="#000" text-anchor="middle">T20</text>
<text x="263.4" y="669.4" font-size="11.5" fill="#000">$</text>
<text x="378.6" y="669.4" font-size="11.5" fill="#000" text-anchor="end">25,035.89</text>
<text x="391.2" y="669.4" font-size="11.5" fill="#000">$</text>
<text x="584.1" y="669.4" font-size="11.5" fill="#000" text-anchor="end">1,015.58</text>
<text x="596.4" y="669.4" font-size="11.5" fill="#000">$</text>
<text x="699.9" y="669.4" font-size="11.5" fill="#000" text-anchor="end">1,016.00</text>
<text x="712.2" y="669.4" font-size="11.5" fill="#000">$</text>
<text x="782.9" y="669.4" font-size="11.5" fill="#000" text-anchor="end">0.00</text>
<text x="795.4" y="669.4" font-size="11.5" fill="#000">$</text>
<text x="942.4" y="669.4" font-size="11.5" fill="#000" text-anchor="end">0.41</text>
<text x="954.9" y="669.4" font-size="11.5" fill="#000">$</text>
<text x="1070.6" y="669.4" font-size="11.5" fill="#000" text-anchor="end">8.20</text>
<text x="1083.4" y="669.4" font-size="11.5" fill="#000">$</text>
<text x="1176.6" y="669.4" font-size="11.5" fill="#000" text-anchor="end">508.20</text>
<text x="1188.9" y="669.4" font-size="11.5" fill="#000">$</text>
<text x="1282.4" y="669.4" font-size="11.5" fill="#000" text-anchor="end">1,008.17</text>
<text x="1295.2" y="669.4" font-size="11.5" fill="#000">$</text>
<text x="1458.1" y="669.4" font-size="11.5" fill="#000" text-anchor="end">7.82</text>
<text x="1470.5" y="669.4" font-size="11.5" fill="#000">$</text>
<text x="1588.1" y="669.4" font-size="11.5" fill="#000" text-anchor="end">3.91</text>
<text x="1684" y="669.4" font-size="11.5" fill="#000" text-anchor="end">0.08139%</text>
<text x="1853.3" y="669.4" font-size="11.5" fill="#000" text-anchor="end">0.04069%</text>
</g>
<rect x="0" y="0" width="1911" height="19" fill="#e6e6e6"/>
<rect x="24" y="2" width="232" height="16" fill="#d2d2d2"/>
<rect x="0" y="18" width="1887" height="1" fill="#ababab"/>
<rect x="256" y="2" width="1" height="17" fill="#ababab"/>
<text x="140.6" y="13.6" font-size="12" fill="#217346" text-anchor="middle">B</text>
<rect x="384" y="2" width="1" height="17" fill="#ababab"/>
<text x="321.1" y="13.6" font-size="12" fill="#1e1e1e" text-anchor="middle">C</text>
<rect x="589" y="2" width="1" height="17" fill="#ababab"/>
<text x="487.6" y="13.6" font-size="12" fill="#1e1e1e" text-anchor="middle">D</text>
<rect x="705" y="2" width="1" height="17" fill="#ababab"/>
<text x="648.1" y="13.6" font-size="12" fill="#1e1e1e" text-anchor="middle">E</text>
<rect x="788" y="2" width="1" height="17" fill="#ababab"/>
<text x="747.6" y="13.6" font-size="12" fill="#1e1e1e" text-anchor="middle">F</text>
<rect x="948" y="2" width="1" height="17" fill="#ababab"/>
<text x="869.1" y="13.6" font-size="12" fill="#1e1e1e" text-anchor="middle">G</text>
<rect x="1076" y="2" width="1" height="17" fill="#ababab"/>
<text x="1013.1" y="13.6" font-size="12" fill="#1e1e1e" text-anchor="middle">H</text>
<rect x="1182" y="2" width="1" height="17" fill="#ababab"/>
<text x="1130.1" y="13.6" font-size="12" fill="#1e1e1e" text-anchor="middle">I</text>
<rect x="1288" y="2" width="1" height="17" fill="#ababab"/>
<text x="1236.1" y="13.6" font-size="12" fill="#1e1e1e" text-anchor="middle">J</text>
<rect x="1463" y="2" width="1" height="17" fill="#ababab"/>
<text x="1376.6" y="13.6" font-size="12" fill="#1e1e1e" text-anchor="middle">K</text>
<rect x="1593" y="2" width="1" height="17" fill="#ababab"/>
<text x="1529.1" y="13.6" font-size="12" fill="#1e1e1e" text-anchor="middle">L</text>
<rect x="1686" y="2" width="1" height="17" fill="#ababab"/>
<text x="1640.6" y="13.6" font-size="12" fill="#1e1e1e" text-anchor="middle">M</text>
<rect x="1855" y="2" width="1" height="17" fill="#ababab"/>
<text x="1771.6" y="13.6" font-size="12" fill="#1e1e1e" text-anchor="middle">N</text>
<rect x="1887" y="2" width="1" height="17" fill="#ababab"/>
<rect x="23" y="2" width="1" height="17" fill="#ababab"/>
<polygon points="20,6 20,15 11,15" fill="#b4b4b4"/>
<rect x="0" y="19" width="23" height="644" fill="#e6e6e6"/>
<rect x="0" y="19" width="23" height="17" fill="#d2d2d2"/>
<rect x="23" y="19" width="1" height="644" fill="#ababab"/>
<rect x="0" y="36" width="23" height="1" fill="#ababab"/>
<rect x="0" y="72" width="23" height="1" fill="#ababab"/>
<rect x="0" y="94" width="23" height="1" fill="#ababab"/>
<rect x="0" y="116" width="23" height="1" fill="#ababab"/>
<rect x="0" y="138" width="23" height="1" fill="#ababab"/>
<rect x="0" y="160" width="23" height="1" fill="#ababab"/>
<rect x="0" y="182" width="23" height="1" fill="#ababab"/>
<rect x="0" y="204" width="23" height="1" fill="#ababab"/>
<rect x="0" y="226" width="23" height="1" fill="#ababab"/>
<rect x="0" y="249" width="23" height="1" fill="#ababab"/>
<rect x="0" y="266" width="23" height="1" fill="#ababab"/>
<rect x="0" y="292" width="23" height="1" fill="#ababab"/>
<rect x="0" y="315" width="23" height="1" fill="#ababab"/>
<rect x="0" y="332" width="23" height="1" fill="#ababab"/>
<rect x="0" y="349" width="23" height="1" fill="#ababab"/>
<rect x="0" y="366" width="23" height="1" fill="#ababab"/>
<rect x="0" y="383" width="23" height="1" fill="#ababab"/>
<rect x="0" y="400" width="23" height="1" fill="#ababab"/>
<rect x="0" y="417" width="23" height="1" fill="#ababab"/>
<rect x="0" y="434" width="23" height="1" fill="#ababab"/>
<rect x="0" y="451" width="23" height="1" fill="#ababab"/>
<rect x="0" y="468" width="23" height="1" fill="#ababab"/>
<rect x="0" y="485" width="23" height="1" fill="#ababab"/>
<rect x="0" y="502" width="23" height="1" fill="#ababab"/>
<rect x="0" y="519" width="23" height="1" fill="#ababab"/>
<rect x="0" y="536" width="23" height="1" fill="#ababab"/>
<rect x="0" y="553" width="23" height="1" fill="#ababab"/>
<rect x="0" y="570" width="23" height="1" fill="#ababab"/>
<rect x="0" y="587" width="23" height="1" fill="#ababab"/>
<rect x="0" y="604" width="23" height="1" fill="#ababab"/>
<rect x="0" y="621" width="23" height="1" fill="#ababab"/>
<rect x="0" y="638" width="23" height="1" fill="#ababab"/>
<rect x="0" y="655" width="23" height="1" fill="#ababab"/>
<text x="11.4" y="31.7" font-size="12" fill="#217346" text-anchor="middle" textLength="6.0" lengthAdjust="spacingAndGlyphs">1</text>
<text x="11.4" y="65.9" font-size="12" fill="#262626" text-anchor="middle" textLength="6.0" lengthAdjust="spacingAndGlyphs">2</text>
<text x="11.4" y="89.7" font-size="12" fill="#262626" text-anchor="middle" textLength="6.0" lengthAdjust="spacingAndGlyphs">3</text>
<text x="11.4" y="111.7" font-size="12" fill="#262626" text-anchor="middle" textLength="6.0" lengthAdjust="spacingAndGlyphs">4</text>
<text x="11.4" y="133.7" font-size="12" fill="#262626" text-anchor="middle" textLength="6.0" lengthAdjust="spacingAndGlyphs">5</text>
<text x="11.4" y="155.7" font-size="12" fill="#262626" text-anchor="middle" textLength="6.0" lengthAdjust="spacingAndGlyphs">6</text>
<text x="11.4" y="177.7" font-size="12" fill="#262626" text-anchor="middle" textLength="6.0" lengthAdjust="spacingAndGlyphs">7</text>
<text x="11.4" y="199.7" font-size="12" fill="#262626" text-anchor="middle" textLength="6.0" lengthAdjust="spacingAndGlyphs">8</text>
<text x="11.4" y="221.7" font-size="12" fill="#262626" text-anchor="middle" textLength="6.0" lengthAdjust="spacingAndGlyphs">9</text>
<text x="11.4" y="243.7" font-size="12" fill="#262626" text-anchor="middle" textLength="12.0" lengthAdjust="spacingAndGlyphs">10</text>
<text x="11.4" y="262.6" font-size="12" fill="#262626" text-anchor="middle" textLength="12.0" lengthAdjust="spacingAndGlyphs">11</text>
<text x="11.4" y="285.1" font-size="12" fill="#262626" text-anchor="middle" textLength="12.0" lengthAdjust="spacingAndGlyphs">12</text>
<text x="11.4" y="309.8" font-size="12" fill="#262626" text-anchor="middle" textLength="12.0" lengthAdjust="spacingAndGlyphs">13</text>
<text x="11.4" y="328.7" font-size="12" fill="#262626" text-anchor="middle" textLength="12.0" lengthAdjust="spacingAndGlyphs">14</text>
<text x="11.4" y="345.7" font-size="12" fill="#262626" text-anchor="middle" textLength="12.0" lengthAdjust="spacingAndGlyphs">15</text>
<text x="11.4" y="362.7" font-size="12" fill="#262626" text-anchor="middle" textLength="12.0" lengthAdjust="spacingAndGlyphs">16</text>
<text x="11.4" y="379.7" font-size="12" fill="#262626" text-anchor="middle" textLength="12.0" lengthAdjust="spacingAndGlyphs">17</text>
<text x="11.4" y="396.7" font-size="12" fill="#262626" text-anchor="middle" textLength="12.0" lengthAdjust="spacingAndGlyphs">18</text>
<text x="11.4" y="413.7" font-size="12" fill="#262626" text-anchor="middle" textLength="12.0" lengthAdjust="spacingAndGlyphs">19</text>
<text x="11.4" y="430.7" font-size="12" fill="#262626" text-anchor="middle" textLength="12.0" lengthAdjust="spacingAndGlyphs">20</text>
<text x="11.4" y="447.7" font-size="12" fill="#262626" text-anchor="middle" textLength="12.0" lengthAdjust="spacingAndGlyphs">21</text>
<text x="11.4" y="464.7" font-size="12" fill="#262626" text-anchor="middle" textLength="12.0" lengthAdjust="spacingAndGlyphs">22</text>
<text x="11.4" y="481.7" font-size="12" fill="#262626" text-anchor="middle" textLength="12.0" lengthAdjust="spacingAndGlyphs">23</text>
<text x="11.4" y="498.7" font-size="12" fill="#262626" text-anchor="middle" textLength="12.0" lengthAdjust="spacingAndGlyphs">24</text>
<text x="11.4" y="515.7" font-size="12" fill="#262626" text-anchor="middle" textLength="12.0" lengthAdjust="spacingAndGlyphs">25</text>
<text x="11.4" y="532.7" font-size="12" fill="#262626" text-anchor="middle" textLength="12.0" lengthAdjust="spacingAndGlyphs">26</text>
<text x="11.4" y="549.7" font-size="12" fill="#262626" text-anchor="middle" textLength="12.0" lengthAdjust="spacingAndGlyphs">27</text>
<text x="11.4" y="566.7" font-size="12" fill="#262626" text-anchor="middle" textLength="12.0" lengthAdjust="spacingAndGlyphs">28</text>
<text x="11.4" y="583.7" font-size="12" fill="#262626" text-anchor="middle" textLength="12.0" lengthAdjust="spacingAndGlyphs">29</text>
<text x="11.4" y="600.7" font-size="12" fill="#262626" text-anchor="middle" textLength="12.0" lengthAdjust="spacingAndGlyphs">30</text>
<text x="11.4" y="617.7" font-size="12" fill="#262626" text-anchor="middle" textLength="12.0" lengthAdjust="spacingAndGlyphs">31</text>
<text x="11.4" y="634.7" font-size="12" fill="#262626" text-anchor="middle" textLength="12.0" lengthAdjust="spacingAndGlyphs">32</text>
<text x="11.4" y="651.7" font-size="12" fill="#262626" text-anchor="middle" textLength="12.0" lengthAdjust="spacingAndGlyphs">33</text>
<text x="11.4" y="668.7" font-size="12" fill="#262626" text-anchor="middle" clip-path="url(#rowclip)" textLength="12.0" lengthAdjust="spacingAndGlyphs">34</text>
<rect x="23" y="18" width="234" height="18" fill="none" stroke="#217346" stroke-width="2"/>
<rect x="252" y="31" width="8" height="8" fill="#fff"/>
<rect x="253" y="32" width="6" height="6" fill="#217346"/>
<rect x="1887" y="0" width="24" height="663" fill="#e6e6e6"/>
<rect x="1890" y="54" width="21" height="586" fill="#dadada"/>
<rect x="1887" y="18" width="1" height="645" fill="#9a9a9a"/>
<rect x="1890.5" y="3.5" width="21" height="23.5" fill="#fff" stroke="#c3c3c3" stroke-width="1"/>
<polygon points="1897,18 1908,18 1902.5,12" fill="#6e6e6e"/>
<rect x="1890.5" y="28.5" width="21" height="25" fill="#fff" stroke="#a6a6a6" stroke-width="1"/>
<rect x="1890.5" y="640.5" width="21" height="23.5" fill="#fff" stroke="#c3c3c3" stroke-width="1"/>
<polygon points="1896.8,650 1908.2,650 1902.5,656" fill="#6e6e6e"/>
<rect x="0" y="663" width="1911" height="34" fill="#e6e6e6"/>
<rect x="0" y="663" width="1888" height="1" fill="#9c9c9c"/>
<rect x="0" y="697" width="1911" height="1" fill="#b9b9b9"/>
<polygon points="33,673 33,685 26.5,679" fill="#c6c6c6"/>
<polygon points="62,673 62,685 68.5,679" fill="#217346"/>
<rect x="116" y="663" width="251" height="28" fill="#fff"/>
<rect x="116" y="663" width="1" height="28" fill="#ababab"/>
<rect x="366" y="663" width="1" height="28" fill="#ababab"/>
<rect x="116" y="692" width="251" height="2" fill="#217346"/>
<text x="127.5" y="685.0" font-size="19.8" fill="#217346" textLength="226.5" lengthAdjust="spacing" font-weight="bold">Value Over 1X Leverage</text>
<text x="386" y="685.0" font-size="19.4" fill="#505050" textLength="176.5" lengthAdjust="spacing">Strategy Calculation</text>
<rect x="582" y="667" width="1" height="26" fill="#ababab"/>
<text x="605" y="685.0" font-size="19.4" fill="#505050" textLength="240.5" lengthAdjust="spacing">Simple Example of Strategy</text>
<rect x="867" y="667" width="1" height="26" fill="#ababab"/>
<text x="885" y="685.0" font-size="19.4" fill="#505050" textLength="100.5" lengthAdjust="spacing">Quick Hints</text>
<rect x="1002" y="667" width="1" height="26" fill="#ababab"/>
<text x="1019.3" y="685.0" font-size="19.4" fill="#505050" clip-path="url(#discclip)">Discla</text>
<text x="1070" y="685" font-size="22" fill="#217346" font-weight="bold">...</text>
<circle cx="1112.8" cy="679.8" r="10.2" fill="none" stroke="#767676" stroke-width="1.3"/>
<rect x="1107.7" y="679.1" width="10.4" height="1.5" fill="#767676"/>
<rect x="1112.15" y="674.6" width="1.5" height="10.4" fill="#767676"/>
<rect x="1146" y="672" width="2.5" height="2.5" fill="#b0b0b0"/>
<rect x="1146" y="678" width="2.5" height="2.5" fill="#b0b0b0"/>
<rect x="1146" y="684" width="2.5" height="2.5" fill="#b0b0b0"/>
<rect x="1166" y="667" width="722" height="24.5" fill="#dadada"/>
<rect x="1166.5" y="667.5" width="24" height="24" fill="#fff" stroke="#c8c8c8" stroke-width="1"/>
<polygon points="1181,673.5 1181,685.5 1174.5,679.5" fill="#666"/>
<rect x="1236.5" y="667.5" width="581.5" height="24" fill="#fff" stroke="#c8c8c8" stroke-width="1"/>
<rect x="1864.5" y="667.5" width="24" height="24" fill="#fff" stroke="#c8c8c8" stroke-width="1"/>
<polygon points="1874.3,673.5 1874.3,685.5 1880.5,679.5" fill="#666"/>
<rect x="0" y="698" width="1911" height="33" fill="#f1f1f1"/>
<text x="5.5" y="718.6" font-size="14.4" fill="#444">Ready</text>
<rect x="1536" y="698" width="45" height="32" fill="#c6c6c6"/>
<g fill="none" stroke="#6a6a6a" stroke-width="1" shape-rendering="crispEdges"><rect x="1549.5" y="704.5" width="18" height="18"/><path d="M1555.5 704.5v18M1561.5 704.5v18M1549.5 710.5h18M1549.5 716.5h18"/></g>
<g fill="none" stroke="#6a6a6a" stroke-width="1" shape-rendering="crispEdges"><rect x="1594.5" y="704.5" width="18" height="18"/><rect x="1598.5" y="707.5" width="10" height="12"/><path d="M1601 710.5h5M1601 713.5h5M1601 716.5h5"/></g>
<g fill="none" stroke="#6a6a6a" stroke-width="1" shape-rendering="crispEdges"><rect x="1639.5" y="704.5" width="18" height="17"/><path d="M1645.5 704.5v9M1651.5 704.5v9M1639.5 713.5h12"/></g>
<rect x="1677" y="712" width="11" height="2" fill="#5a5a5a"/>
<rect x="1694" y="712" width="148" height="2" fill="#a6a6a6"/>
<rect x="1767" y="709" width="2" height="8" fill="#a6a6a6"/>
<rect x="1734" y="705" width="6" height="16.5" fill="#666"/>
<rect x="1848.5" y="711.5" width="13.2" height="3" fill="#666"/>
<rect x="1853.6" y="706.4" width="3" height="13.2" fill="#666"/>
<text x="1879.5" y="718.8" font-size="14.6" fill="#505050" textLength="30.5" lengthAdjust="spacing">60%</text>
<rect x="0" y="730" width="1911" height="1" fill="#a8a8a8"/>
<rect x="0" y="730" width="70" height="1" fill="#111"/>
<rect x="586" y="730" width="432" height="1" fill="#111"/>
<rect x="1085" y="730" width="826" height="1" fill="#111"/>
</svg>
</body></html>
